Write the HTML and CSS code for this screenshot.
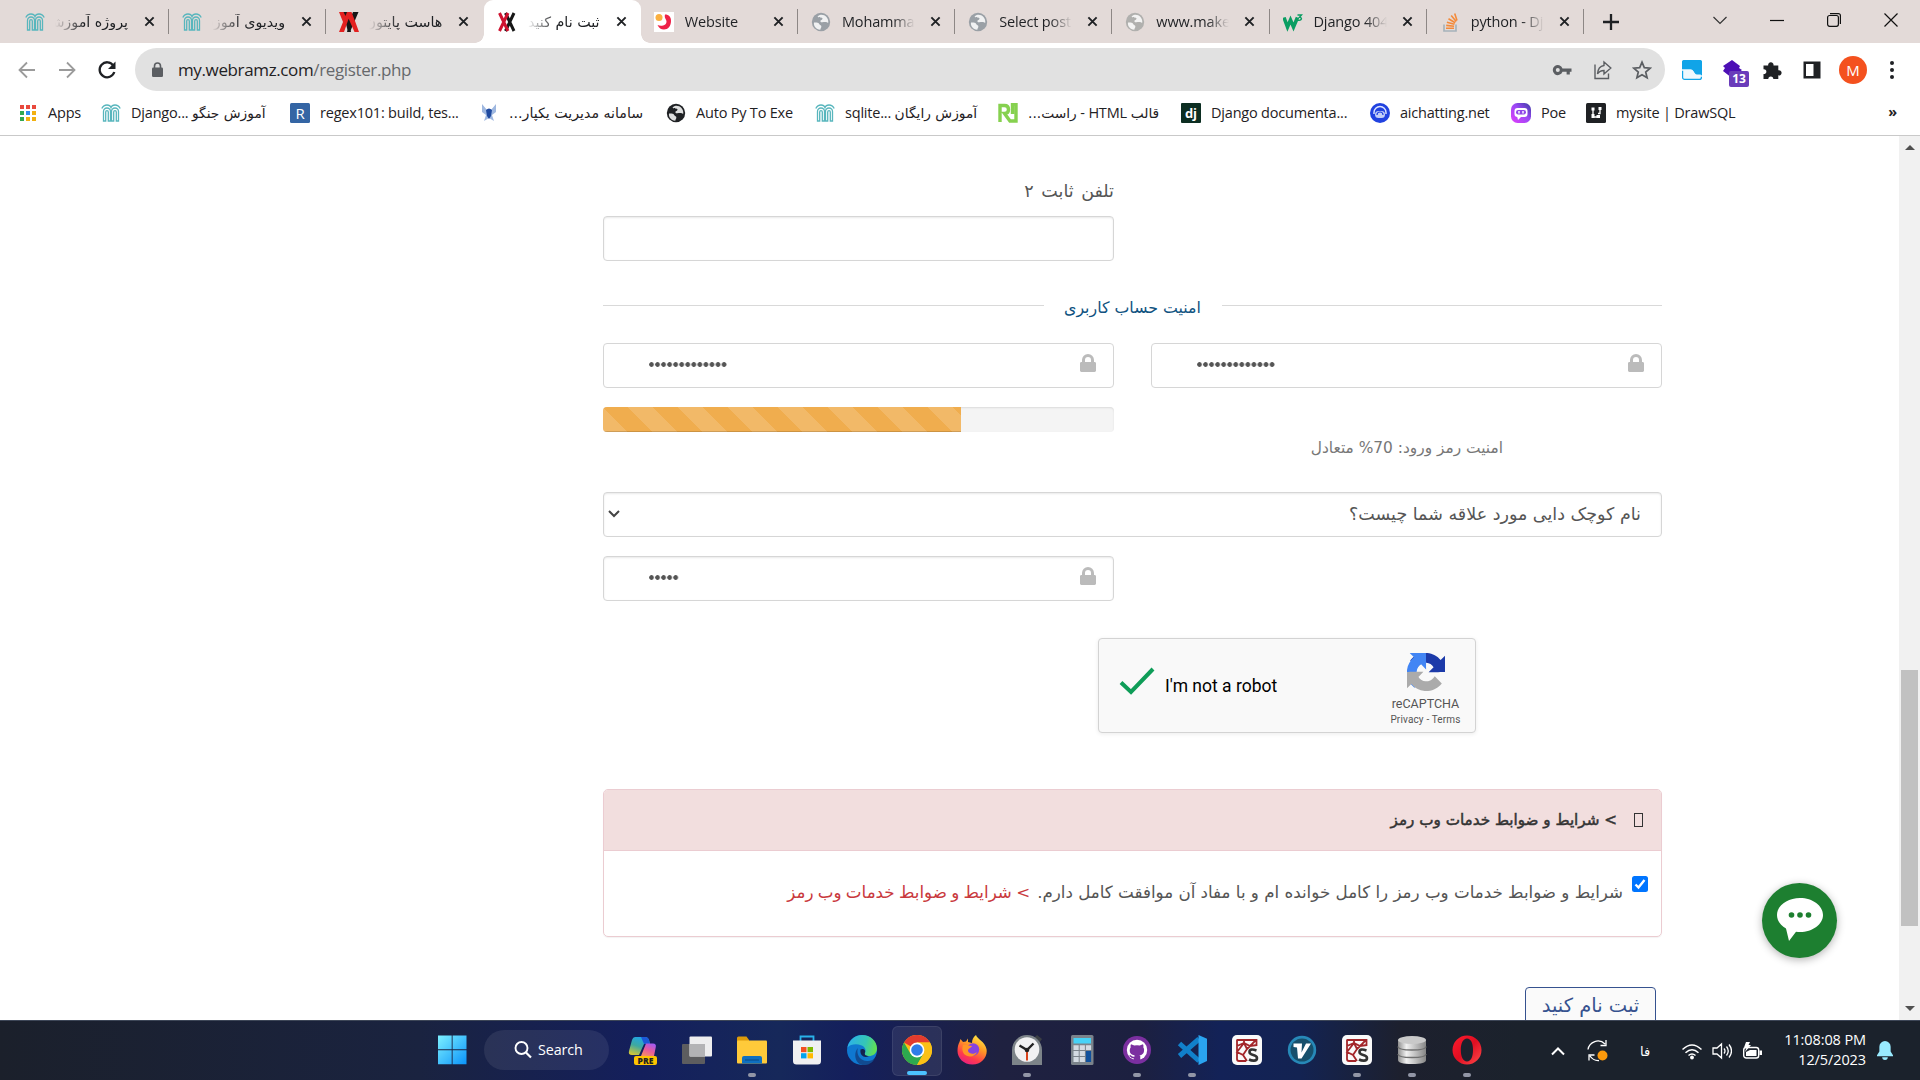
FILE: index.html
```html
<!DOCTYPE html>
<html lang="fa">
<head>
<meta charset="utf-8">
<title>ثبت نام کنید</title>
<link rel="stylesheet" href="styles.css">
</head>
<body>
<svg class="defs" width="0" height="0">
  <symbol id="i-x" viewBox="0 0 12 12"><path d="M1.5 1.5 10.5 10.5M10.5 1.5 1.5 10.5" stroke="#1f2124" stroke-width="2.1" fill="none"/></symbol>
  <symbol id="i-arches" viewBox="0 0 20 18"><g fill="none" stroke="#58b6bd" stroke-width="1.3"><path d="M.8 4.5C2 2 4 1 6 1s3.500 1 4 2.500C10.500 2 12 1 14 1s4 1 5.200 3.500"/><path d="M2.500 17V7.500a3.500 3.500 0 0 1 7 0V17H7.300V8a1.300 1.300 0 0 0-2.600 0v9zM10.500 17V7.500a3.500 3.500 0 0 1 7 0V17h-2.200V8a1.300 1.300 0 0 0-2.600 0v9z"/></g></symbol>
  <symbol id="i-globe" viewBox="0 0 20 20"><circle cx="10" cy="10" r="9.200"/><path d="M3 10.500c2 0 4.500-.2 5 1.300.6 1.600 2.800 1 2.300 3.200-.2 1.100-.9 1.600-1 2.700C5 17.500 2.300 14 3 10.500zM6.500 4.500c1.600 2 4.500.3 5 2 .3 1.500-2.500 1.300-2 3 .4 1.400 3 .6 4.700.6 1.800 0 2.300 1 3.100.4C17.800 6 14 2.300 9.800 2.700c-1.500.2-2.500.9-3.300 1.800z" fill="#fff" opacity=".85"/></symbol>
  <symbol id="i-lock" viewBox="0 0 16 18"><path d="M2 8V6a6 6 0 0 1 12 0v2h.6c.8 0 1.400.6 1.400 1.400v7.200c0 .8-.6 1.400-1.400 1.400H1.400C.6 18 0 17.400 0 16.600V9.400C0 8.600.6 8 1.400 8zm3 0h6V6a3 3 0 0 0-6 0z" fill="#bbb"/></symbol>
  <symbol id="i-spyder" viewBox="0 0 30 30"><rect width="30" height="30" rx="5" fill="#fafafa"/><path d="M4.500 5h20v6M5 5v19q0 2 2 2h7M5 11l7-3 6 3 7-1M12 8V5M12 8 5 17l6 3 4 6M5 17v-6M24 5l-9 9-4 6M15 14l-3-6" fill="none" stroke="#a3262a" stroke-width="1.800"/><path d="M24.500 15.500q-7-2.500-7 1.500c0 4 7.500 2 7.500 6 0 3.800-5.500 2.800-8 1.500" fill="none" stroke="#333" stroke-width="2.600"/></symbol>
</svg>

<header class="browser">
  <div class="tabs">
    <div class="tab"><svg class="fav"><use href="#i-arches"/></svg><span class="title rtl">پروژه آموزشی</span><svg class="x"><use href="#i-x"/></svg></div>
    <div class="tab"><svg class="fav"><use href="#i-arches"/></svg><span class="title rtl">ویدیوی آموزشی</span><svg class="x"><use href="#i-x"/></svg></div>
    <div class="tab nosep"><svg class="fav" viewBox="0 0 20 20"><path d="M4 0h5l2.500 6L14 0h5.500L11 20H9z" fill="#161616"/><path d="M0 0h4.500l4 8-3.500 12H0l4-10zM20 20h-4.500L8 3l2-3h2.500l3.500 9zM12 0l-7 20H.5L8 0z" fill="#e3201f"/><path d="M8 20l2-6 2 6z" fill="#161616"/></svg><span class="title rtl">هاست پایتون</span><svg class="x"><use href="#i-x"/></svg></div>
    <div class="tab active"><svg class="fav" viewBox="0 0 20 20"><path d="M8.500 1 17 19M17 1 8.500 19" stroke="#161616" stroke-width="3"/><path d="M2.500 1 11 19M11 1 2.500 19" stroke="#cf1330" stroke-width="3"/></svg><span class="title rtl">ثبت نام کنید</span><svg class="x"><use href="#i-x"/></svg></div>
    <div class="tab"><svg class="fav" viewBox="0 0 20 20"><rect width="20" height="20" fill="#fff"/><circle cx="5" cy="5.500" r="3.500" fill="#fbb040"/><path d="M11 2.500c4 0 6 2.500 6 6.500 0 5-3 8.500-7 8.500-3 0-5-1.500-6.500-4.500 3 1.500 9 1 9-3.500 0-2.500-2.500-3-1.500-7z" fill="#ee2147"/></svg><span class="title">Website</span><svg class="x"><use href="#i-x"/></svg></div>
    <div class="tab"><svg class="fav g1"><use href="#i-globe"/></svg><span class="title">Mohammad</span><svg class="x"><use href="#i-x"/></svg></div>
    <div class="tab"><svg class="fav g1"><use href="#i-globe"/></svg><span class="title">Select post</span><svg class="x"><use href="#i-x"/></svg></div>
    <div class="tab"><svg class="fav g2"><use href="#i-globe"/></svg><span class="title">www.makeuse</span><svg class="x"><use href="#i-x"/></svg></div>
    <div class="tab"><svg class="fav" viewBox="0 0 20 20"><path d="M1 5.500 4.500 15 7.500 8l3 7L14.500 5.500" fill="none" stroke="#0a9d62" stroke-width="3.600"/><path d="M14.500 3h4l-2 2.300c3 0 2.500 3.700-1.500 2.900" fill="none" stroke="#0a9d62" stroke-width="1.400"/></svg><span class="title">Django 404</span><svg class="x"><use href="#i-x"/></svg></div>
    <div class="tab"><svg class="fav" viewBox="0 0 20 20"><path d="M4 12.500V19h12v-6.500" fill="none" stroke="#a7b3bb" stroke-width="1.700"/><path d="M6 16.300h8M6.200 13.400l7.900.8M6.900 10.300l7.600 2M8.500 6.800l6.700 4M11.200 3.500l5 6M14.700 1.500l2.300 7" stroke="#f48a3a" stroke-width="1.600"/></svg><span class="title">python - Dj</span><svg class="x"><use href="#i-x"/></svg></div>
    <svg class="plus" viewBox="0 0 16 16"><path d="M8 0v16M0 8h16" stroke="#1f2124" stroke-width="2.300"/></svg>
    <div class="winctl">
      <svg viewBox="0 0 14 14"><path d="M.5 4 7 10.500 13.500 4" fill="none" stroke="#333" stroke-width="1.200"/></svg>
      <svg viewBox="0 0 14 14"><path d="M0 7.500h14" stroke="#111" stroke-width="1.200"/></svg>
      <svg viewBox="0 0 14 14"><path d="M3 .6h8.400a2 2 0 0 1 2 2V11" fill="none" stroke="#111" stroke-width="1.200"/><rect x=".6" y="2.500" width="10.800" height="10.800" rx="2" fill="none" stroke="#111" stroke-width="1.200"/></svg>
      <svg viewBox="0 0 14 14"><path d="M.5.5l13 13M13.500.5l-13 13" stroke="#111" stroke-width="1.200"/></svg>
    </div>
  </div>

  <div class="toolbar">
    <div class="nav">
      <svg viewBox="0 0 20 20"><path d="M18 10H3M10 2.500 2.500 10l7.500 7.500" fill="none" stroke="#9b9b9b" stroke-width="1.800"/></svg>
      <svg viewBox="0 0 20 20"><path d="M2 10h15M10 2.500l7.500 7.500-7.500 7.500" fill="none" stroke="#9b9b9b" stroke-width="1.800"/></svg>
      <svg viewBox="0 0 20 20"><path d="M16.300 5.500A7.500 7.500 0 1 0 17.300 12" fill="none" stroke="#1f2124" stroke-width="2.300"/><path d="M18.500 1.500v7.500H11z" fill="#1f2124"/></svg>
    </div>
    <div class="omni">
      <svg class="olock" viewBox="0 0 11 15"><path d="M2.500 6V4a3 3 0 0 1 6 0v2" fill="none" stroke="#5b5e62" stroke-width="1.600"/><rect y="5.500" width="11" height="9.500" rx="1.300" fill="#5b5e62"/></svg>
      <span class="url">my.webramz.com<i>/register.php</i></span>
      <svg class="oic" viewBox="0 0 20 20"><path d="M10.500 8.500h9v3.200h-1.700v2.800h-3.200v-2.800h-4.100a5 5 0 1 1 0-3.200zM5.800 8.100a2 2 0 1 0 0 4 2 2 0 0 0 0-4z" fill="#5b5e62"/></svg>
      <svg class="oic" viewBox="0 0 20 20"><path d="M3 4.500v14h13.500v-5M12 2l6.800 6L12 14v-3.500c-3 0-5 1-6.500 3.500.3-5 3-8 6.500-8.500z" fill="none" stroke="#5b5e62" stroke-width="1.400"/></svg>
      <svg class="oic star" viewBox="0 0 20 20"><path d="M10 2.200l2.300 5.400 5.900.5-4.500 3.900 1.400 5.700-5.100-3-5.100 3 1.400-5.700L1.800 8.100l5.900-.5z" fill="none" stroke="#5b5e62" stroke-width="1.700"/></svg>
    </div>
    <div class="ext">
      <svg viewBox="0 0 20 20"><rect x=".6" y=".6" width="18.800" height="18.800" rx="2" fill="#eef8fd" stroke="#10a4e8" stroke-width="1.200"/><path d="M0 2q0-2 2-2h16q2 0 2 2v12.500h-5c-3 0-2.500-4.500-6-4.500H0z" fill="#10a4e8"/><path d="M0 10h8.500c3.500 0 2 6 6 6H20" fill="none" stroke="#eef8fd" stroke-width="1.400"/></svg>
      <div class="badged"><svg viewBox="0 0 20 20"><path d="M10 0l8 6-1 2 3 2-10 8-9-7 2-3-2-2z" fill="#4d0fb5"/></svg><b>13</b></div>
      <svg viewBox="0 0 20 20"><path d="M1.500 5.500h4.700a2.700 2.700 0 1 1 5.300 0h4.800v4.800a2.600 2.600 0 1 1 0 5V19h-5a2.500 2.500 0 1 0-5 0H1.500v-5a2.400 2.400 0 1 0 0-4.700z" fill="#1f2124"/></svg>
      <svg viewBox="0 0 20 20"><path d="M1.500 1.500h17v17h-17zM4 4v12h7.500V4z" fill="#1f2124" fill-rule="evenodd"/></svg>
      <span class="avatar">M</span>
      <svg class="dots3" viewBox="0 0 20 20"><circle cx="10" cy="3" r="2"/><circle cx="10" cy="10" r="2"/><circle cx="10" cy="17" r="2"/></svg>
    </div>
  </div>

  <div class="marks">
    <div class="bm b1"><svg viewBox="0 0 20 20"><g><path d="M2 2h4v4H2zM8 2h4v4H8zM14 2h4v4h-4z" fill="#e9493d"/><path d="M2 8h4v4H2z" fill="#31a852"/><path d="M8 8h4v4H8z" fill="#2f8df0"/><path d="M14 8h4v4h-4zM8 14h4v4H8zM14 14h4v4h-4z" fill="#f2b010"/><path d="M2 14h4v4H2z" fill="#31a852"/></g></svg><span class="t">Apps</span></div>
    <div class="bm b2"><svg><use href="#i-arches"/></svg><span class="t">Django... <span class="fa">آموزش جنگو</span></span></div>
    <div class="bm b3"><svg viewBox="0 0 20 20"><rect width="20" height="20" rx="1.500" fill="#3465a4"/><text x="10" y="15.500" text-anchor="middle" class="svgR">R</text></svg><span class="t">regex101: build, tes...</span></div>
    <div class="bm b4"><svg viewBox="0 0 20 20"><path d="M3 1l5 6h4l5-6v8l-4 3 2 6-5-3-5 3 2-6-4-3z" fill="#9fb8e0"/><path d="M7 7q3-3 6 0l-1 6-2 3-2-3z" fill="#1f4aa0"/></svg><span class="t fa rtl">سامانه مدیریت یکپار...</span></div>
    <div class="bm b5"><svg class="g3"><use href="#i-globe"/></svg><span class="t">Auto Py To Exe</span></div>
    <div class="bm b6"><svg><use href="#i-arches"/></svg><span class="t">sqlite... <span class="fa">آموزش رایگان</span></span></div>
    <div class="bm b7"><svg viewBox="0 0 20 20"><path d="M2 19V2.500h4.500q4 0 4 4t-4 4L12 18h6V1h-3.500v10" fill="none" stroke="#86d14f" stroke-width="3.400"/></svg><span class="t rtl"><span class="fa">قالب</span> HTML - <span class="fa">راست...</span></span></div>
    <div class="bm b8"><svg viewBox="0 0 20 20"><rect width="20" height="20" rx="1" fill="#0c2e22"/><text x="10" y="14.500" text-anchor="middle" class="svgdj">dj</text></svg><span class="t">Django documenta...</span></div>
    <div class="bm b9"><svg viewBox="0 0 20 20"><circle cx="10" cy="10" r="10" fill="#2142e0"/><path d="M4 11V9.500a6 6 0 0 1 12 0V11" fill="none" stroke="#dfe6ff" stroke-width="1.400"/><rect x="5" y="8" width="10" height="7" rx="3.500" fill="#c3cff8"/><path d="M7 12a3 3 0 0 1 6 0" fill="none" stroke="#2142e0" stroke-width="1.200"/></svg><span class="t">aichatting.net</span></div>
    <div class="bm b10"><svg viewBox="0 0 20 20"><defs><linearGradient id="poe" x1="0" y1="1" x2="1" y2="0"><stop offset="0" stop-color="#e23dfb"/><stop offset=".55" stop-color="#9a48f5"/><stop offset="1" stop-color="#3a3ca0"/></linearGradient></defs><rect width="20" height="20" rx="6.500" fill="url(#poe)"/><rect x="3.500" y="5" width="13" height="9" rx="3" fill="#fff"/><path d="M6 13h5l-4 4z" fill="#fff"/><rect x="5" y="7" width="10" height="4.500" rx="2.200" fill="#9046e8"/><path d="M8 8v2.500M12 8v2.500" stroke="#fff" stroke-width="1.400"/></svg><span class="t">Poe</span></div>
    <div class="bm b11"><svg viewBox="0 0 20 20"><rect width="20" height="20" rx="1.500" fill="#1f2124"/><path d="M7 6v8h7M14 5v5.500h-2" fill="none" stroke="#fff" stroke-width="1.300"/><path d="M5.500 4.500h3v3h-3zM5.500 11h3v4h-3zM12.500 4h3v3h-3zM10.500 12h3.500v3h-3.500z" fill="#fff"/></svg><span class="t">mysite | DrawSQL</span></div>
    <span class="more">»</span>
  </div>
</header>

<main class="page">
  <form class="form" dir="rtl">
    <div class="half">
      <label class="lab fa"><span class="t">تلفن ثابت ۲</span></label>
      <div class="inp shade"></div>
    </div>
    <div class="legend"><hr><span class="fa t">امنیت حساب کاربری</span><hr></div>
    <div class="row">
      <div class="inp pw"><svg class="lk"><use href="#i-lock"/></svg><span class="pd n13"></span></div>
      <div class="inp pw"><svg class="lk"><use href="#i-lock"/></svg><span class="pd n13"></span></div>
    </div>
    <div class="row strength">
      <p class="fa hint"><span class="t">امنیت رمز ورود: <span class="num">70%</span> متعادل</span></p>
      <div class="bar"><div class="fill" style="width:70%"></div></div>
    </div>
    <div class="inp sel shade"><span class="fa t">نام کوچک دایی مورد علاقه شما چیست؟</span><svg viewBox="0 0 12 8"><path d="M1 1l5 5 5-5" fill="none" stroke="#444" stroke-width="2"/></svg></div>
    <div class="half answer"><div class="inp pw shade"><svg class="lk"><use href="#i-lock"/></svg><span class="pd n5"></span></div></div>
    <div class="captcha" dir="ltr">
      <svg class="ok" viewBox="0 0 36 28"><path d="M2 15.500 12 25 34 2" fill="none" stroke="#0f9d58" stroke-width="4"/></svg>
      <span class="robot t">I'm not a robot</span>
      <div class="brand">
        <svg viewBox="0 0 64 64"><path d="M64 31.955a33.240 33.240 0 0 0-.015-.945V4.568l-7.310 7.310C50.692 4.554 41.590-.117 31.400-.117c-10.605 0-20.026 4.980-26.041 12.690l11.982 12.108a15.872 15.872 0 0 1 4.853-5.447c2.092-1.633 5.057-2.969 9.206-2.969.501 0 .888.059 1.172.169 5.140.406 9.596 3.243 12.220 7.361l-8.481 8.482c10.743-.042 22.879-.067 27.688-.322" fill="#1c3aa9"/><path d="M31.862-.094a33.240 33.240 0 0 0-.945.015H4.475l7.310 7.310C4.460 13.214-.21 22.315-.21 32.506c0 10.604 4.980 20.025 12.690 26.040l12.108-11.981a15.872 15.872 0 0 1-5.447-4.854c-1.633-2.091-2.970-5.056-2.970-9.205 0-.502.060-.889.170-1.172.405-5.140 3.242-9.597 7.360-12.220l8.482 8.481c-.042-10.743-.067-22.880-.321-27.690" fill="#4285f4"/><path d="M-.001 32.055c.003.316.010.631.015.945v26.442l7.310-7.310c5.983 7.324 15.084 11.995 25.275 11.995 10.605 0 20.026-4.980 26.041-12.690L46.658 39.329a15.873 15.873 0 0 1-4.854 5.447c-2.092 1.633-5.056 2.969-9.205 2.969-.502 0-.888-.059-1.173-.169-5.140-.406-9.596-3.243-12.219-7.361l8.481-8.482c-10.743.042-22.880.067-27.689.322" fill="#ababab"/></svg>
        <b class="t">reCAPTCHA</b>
        <small class="t">Privacy - Terms</small>
      </div>
    </div>
    <section class="panel">
      <h3 class="fa"><i class="tofu"></i><span class="t">&gt; شرایط و ضوابط خدمات وب رمز</span></h3>
      <div class="body fa">
        <span class="cb"><svg viewBox="0 0 16 16"><path d="M3.500 8.500 6.500 11.500 12.500 4" fill="none" stroke="#fff" stroke-width="2.400"/></svg></span>
        <span class="t agree">شرایط و ضوابط خدمات وب رمز را کامل خوانده ام و با مفاد آن موافقت کامل دارم.</span>
        <a class="t">&gt; شرایط و ضوابط خدمات وب رمز</a>
      </div>
    </section>
    <div class="btn fa"><span class="t">ثبت نام کنید</span></div>
  </form>
  <div class="scroll"><i class="up"></i><div class="thumb"></div><i class="down"></i></div>
  <div class="chat"><svg viewBox="0 0 46 44"><path d="M23 0c12.700 0 23 7.600 23 17s-10.300 17-23 17q-2 0-4-.3L12 43 9 30.500C3.500 27.500 0 22.500 0 17 0 7.600 10.300 0 23 0z" fill="#fff"/><circle cx="14.500" cy="17" r="2.800"/><circle cx="23" cy="17" r="2.800"/><circle cx="31.500" cy="17" r="2.800"/></svg></div>
</main>

<footer class="taskbar">
  <div class="cell"><svg viewBox="0 0 30 30"><defs><linearGradient id="win" x1="0" y1="0" x2="1" y2="1"><stop offset="0" stop-color="#7df0ff"/><stop offset="1" stop-color="#0a93fa"/></linearGradient></defs><path d="M1 .500h13.700v13.800H1zM15.600.500H29.500v13.800H15.600zM1 15.300h13.700v14H1zM15.600 15.300H29.500v14H15.600z" fill="url(#win)"/></svg></div>
  <div class="search"><svg viewBox="0 0 18 18"><circle cx="7.500" cy="7" r="6" fill="none" stroke="#fff" stroke-width="1.900"/><path d="M12 11.500l5 5" stroke="#fff" stroke-width="2.200"/></svg><span class="t">Search</span></div>
  <div class="cell"><svg viewBox="0 0 30 30"><defs><linearGradient id="cpa" x1=".6" y1="0" x2=".2" y2="1"><stop offset="0" stop-color="#1fa5e8"/><stop offset=".5" stop-color="#3ea9a0"/><stop offset="1" stop-color="#d7c734"/></linearGradient><linearGradient id="cpb" x1=".7" y1="0" x2=".2" y2="1"><stop offset="0" stop-color="#a45bf0"/><stop offset=".5" stop-color="#e85a9c"/><stop offset="1" stop-color="#f58f63"/></linearGradient></defs><path d="M8 2h10q3 0 4 3l1 4h-6L12 20H5q-4 0-3-4L5 5q1-3 3-3z" fill="url(#cpa)"/><path d="M14 2h4q3 0 4 3l1 4h-6z" fill="#1c58d8"/><path d="M19 8.500h7q3.500 0 2.800 3.500L27 21H14z" fill="url(#cpb)"/><rect x="7" y="21" width="23" height="9" rx="2" fill="#fec400"/><text x="18.500" y="28.600" text-anchor="middle" class="svgpre">PRE</text></svg></div>
  <div class="cell"><svg viewBox="0 0 30 30"><rect y="9" width="23" height="20" rx="1" fill="#5d5d5f"/><rect x="7.500" y="1.500" width="22.500" height="20" rx="1" fill="#ededee"/><path d="M7.500 9H23v12.500H7.500z" fill="#b3b3b5"/></svg></div>
  <div class="cell run"><svg viewBox="0 0 30 30"><path d="M0 3q0-1.500 1.500-1.500h8L12 5v3H0z" fill="#dd9b0a"/><rect y="5.500" width="30" height="23" rx="1" fill="#ffca3a"/><path d="M5 28.500V23q0-2 2-2h16q2 0 2 2v5.500z" fill="#0f70c0"/><path d="M8 25h14" stroke="#0a4f8f" stroke-width="1.200"/></svg></div>
  <div class="cell"><svg viewBox="0 0 30 30"><path d="M8.500 6V1.500h13V6" fill="none" stroke="#29b2ea" stroke-width="1.800"/><path d="M1 5.500h28V26q0 3.500-3.500 3.500h-21Q1 29.500 1 26z" fill="#f0f0f1"/><path d="M9 12h5.500v5.200H9z" fill="#f25022"/><path d="M15.500 12H21v5.200h-5.500z" fill="#7fba00"/><path d="M9 18.200h5.500v5.200H9z" fill="#00a4ef"/><path d="M15.500 18.200H21v5.200h-5.500z" fill="#ffb900"/></svg></div>
  <div class="cell"><svg viewBox="0 0 30 30"><defs><linearGradient id="edg" x1="0" y1=".3" x2="1" y2=".5"><stop offset="0" stop-color="#2cb0ea"/><stop offset=".6" stop-color="#35c6b6"/><stop offset="1" stop-color="#63e04f"/></linearGradient></defs><circle cx="15" cy="15" r="15" fill="#0f78d0"/><path d="M.5 12.500C2 5 8 0 15 0c8.500 0 15 6 15 13.500 0 5-4 7.500-8 7.500-3 0-5-1-4-3 1.500-3 0-6.500-4-7.800C9 8.500 3 9.500.5 12.500z" fill="url(#edg)"/><path d="M11 13c-2 5 1 12.500 9 13 3 .3 6-.8 8-3-3 6-8 7.500-12.500 7C8 29 6 18 11 13z" fill="#114b91"/><path d="M13.500 14.500c2.500-1.500 5.500.5 4.500 3-1 2.500 1 3.500 4 3.500-4 2.500-9.500 0-8.500-6.500z" fill="#14224f"/></svg></div>
  <div class="cell on"><svg viewBox="0 0 30 30"><circle cx="15" cy="15" r="15" fill="#fbc116"/><path d="M15 15 2 7.500A15 15 0 0 1 28 7.500H15z" fill="#e33b2e"/><path d="M2 7.500A15 15 0 0 0 15 30l6.500-11.200L15 15 8.500 18.800z" fill="#2da94f"/><path d="M28 7.500H15v7.500l6.500 3.800L15 30A15 15 0 0 0 28 7.500z" fill="#fbc116"/><circle cx="15" cy="15" r="7.400" fill="#fff"/><circle cx="15" cy="15" r="5.800" fill="#2f7de9"/></svg></div>
  <div class="cell"><svg viewBox="0 0 30 30"><defs><linearGradient id="ff" x1=".8" y1="0" x2=".3" y2="1"><stop offset="0" stop-color="#fff04a"/><stop offset=".4" stop-color="#ff9a24"/><stop offset=".75" stop-color="#ff3b4c"/><stop offset="1" stop-color="#e81f80"/></linearGradient></defs><path d="M2.500 7l1-3 2.500 3 3-.5 2-3v3.500l4 1c0-3 1-6 4-8 1 4 9 6.500 10.500 14C31 22 24.500 29.500 15.500 29.500S.5 23 .5 16c0-4 .8-7 2-9z" fill="url(#ff)"/><circle cx="16" cy="14.500" r="6.200" fill="#8543e0"/><path d="M6 10c4-1 6 1 9 1-1 2-4 2-4 5 1 3 6 4 9 1-2 5-9 6-13 2-2-3-2-6-1-9z" fill="#ff9526"/></svg></div>
  <div class="cell run"><svg viewBox="0 0 30 30"><path d="M22 3l3-3 5 4-3 4z" fill="#3b3f44"/><path d="M0 15A15 15 0 0 1 30 15V30H0z" fill="#7d8489"/><circle cx="15" cy="14.500" r="12.300" fill="#f1f1f2"/><path d="M7.500 10.500 15 15l6.500-6.500" fill="none" stroke="#222" stroke-width="2.400"/><path d="M15 15v10.500" stroke="#d8431c" stroke-width="2"/><circle cx="15" cy="15" r="2.300" fill="#222"/></svg></div>
  <div class="cell"><svg viewBox="0 0 30 30"><rect x="4" width="22.500" height="30" rx="1.500" fill="#7b838b"/><rect x="6.500" y="3" width="17.500" height="5.500" fill="#46d2f7"/><path d="M6.500 10.200h5.200v4.800H6.500zM12.700 10.200h5.200v4.800h-5.200zM18.900 10.200h5.200v4.800h-5.200zM6.500 16.100h5.200v4.800H6.500zM12.700 16.100h5.200v4.800h-5.200zM6.500 22h5.200v5H6.500zM12.700 22h5.200v5h-5.200z" fill="#d3dae2"/><path d="M18.900 16.100h5.200V27h-5.200z" fill="#10509c"/></svg></div>
  <div class="cell run"><svg viewBox="0 0 30 30"><circle cx="15" cy="15" r="14" fill="#7b2fa0"/><circle cx="15" cy="15" r="10.200" fill="#fff"/><path d="M12.500 25.500v-3c-3 .7-3.500-1.500-4.800-2.200M17.500 25.500V20.500" fill="none" stroke="#7b2fa0" stroke-width="1.500"/><path d="M9 9.300l3.300 1.300q2.700-.6 5.400 0L21 9.300q.8 1.500.3 3 1.200 1.500.7 4-.6 3.700-4.500 4v6h-5v-6c-4-.4-5-3-4.700-5.500.1-1 .4-1.800.9-2.500q-.5-1.500.3-3z" fill="#7b2fa0"/></svg></div>
  <div class="cell run"><svg viewBox="0 0 30 30"><path d="M2.500 8.500 22 26M2.500 21 22 4" stroke="#1180cb" stroke-width="5"/><path d="M21.500 0 30 3.800V26l-8.500 4z" fill="#2aa4f0"/></svg></div>
  <div class="cell"><svg><use href="#i-spyder"/></svg></div>
  <div class="cell"><svg viewBox="0 0 30 30"><circle cx="15" cy="15" r="14.200" fill="#2789b8"/><circle cx="15" cy="15" r="11.500" fill="#17506c"/><path d="M6.500 8.500h8.500l-.5 9 4.500-9h5L14.500 23.500H11l-1-11-3.500-.5z" fill="#fff"/></svg></div>
  <div class="cell run"><svg><use href="#i-spyder"/></svg></div>
  <div class="cell run"><svg viewBox="0 0 30 30"><defs><linearGradient id="db"><stop offset="0" stop-color="#8e8e8e"/><stop offset=".3" stop-color="#f1f1f1"/><stop offset="1" stop-color="#868686"/></linearGradient></defs><path d="M1 5h28v20q0 4-14 4T1 25z" fill="url(#db)"/><ellipse cx="15" cy="5" rx="14" ry="4" fill="#c9c9c9"/><path d="M1 11.500q0 3.500 14 3.500t14-3.500M1 19q0 3.500 14 3.500T29 19" fill="none" stroke="#6f6f6f" stroke-width="1.300"/></svg></div>
  <div class="cell run"><svg viewBox="0 0 30 30"><defs><linearGradient id="op" x1="0" y1="0" x2="1" y2="1"><stop offset="0" stop-color="#ff1b2d"/><stop offset=".5" stop-color="#e00e22"/><stop offset="1" stop-color="#ff4b4b"/></linearGradient></defs><path d="M15 .5a14.500 14.500 0 1 1 0 29 14.500 14.500 0 0 1 0-29zM15 3.500c-4 0-6.200 5-6.200 11.500S11 26.500 15 26.500 21 21.500 21 15 19 3.500 15 3.500z" fill="url(#op)" fill-rule="evenodd"/></svg></div>
  <div class="tray">
    <svg class="chev" viewBox="0 0 14 10"><path d="M1 8.500 7 2.500l6 6" fill="none" stroke="#fff" stroke-width="2"/></svg>
    <svg class="sync" viewBox="0 0 22 22"><path d="M1 9.500A10 10 0 0 1 18 4M19 0v5.500h-5.500M12 20.500A10 10 0 0 1 3 16M2 20.500V15h5.500" fill="none" stroke="#fff" stroke-width="1.300"/><circle cx="15.500" cy="15.500" r="5" fill="#fd9a0b"/></svg>
    <span class="lang t">فا</span>
    <svg class="st" viewBox="0 0 20 20"><g fill="none" stroke="#fff" stroke-width="1.500"><path d="M.5 8.500q9.500-9 19 0M3.500 11.700q6.500-6 13 0M6.500 14.500q3.500-3 7 0"/></g><circle cx="10" cy="16.500" r="1.900" fill="#fff"/></svg>
    <svg class="st" viewBox="0 0 20 20"><g fill="none" stroke="#fff" stroke-width="1.300"><path d="M1 7h4l4.500-4v14L5 13H1zM12 7.500q2 2.500 0 5M14.500 5.500q3.500 4.500 0 9M17 3.500q5 6.500 0 13"/></g></svg>
    <svg class="st" viewBox="0 0 20 20"><rect x="1.700" y="6.500" width="15" height="10.500" rx="2.500" fill="none" stroke="#fff" stroke-width="1.400"/><path d="M4 15V11l4-2h6.500v6zM17.500 9.500H20v4.500h-2.500zM4 1h4L6.500 4H9l-6 7 1.500-4.500H2z" fill="#fff"/></svg>
    <div class="clock"><span class="t">11:08:08 PM</span><span class="t">12/5/2023</span></div>
    <svg class="bell" viewBox="0 0 17 20"><path d="M8.500 0a6 6 0 0 1 6 6v5l2.500 4v1H0v-1l2.500-4V6a6 6 0 0 1 6-6zM5.500 17.300h6a3 2.700 0 0 1-6 0z" fill="#99ebff"/></svg>
  </div>
</footer>
</body>
</html>
```
FILE: styles.css
```css
* { box-sizing: border-box; }
body {
  margin: 0;
  width: 1920px;
  height: 1080px;
  overflow: hidden;
  display: flex;
  flex-direction: column;
  font-family: "Open Sans", "DejaVu Sans", sans-serif;
  background: #fff;
  color: #1f2124;
}
svg { display: block; flex: none; }
.defs { position: absolute; }
.fa { font-family: "DejaVu Sans", sans-serif; }
.rtl { direction: rtl; }
.t { white-space: nowrap; }

/* tab strip */
.browser { height: 136px; flex: none; border-bottom: 1px solid #c9c9c9; }
.tabs { height: 43px; background: #e3dad8; display: flex; padding-left: 12px; align-items: center; }
.tab { width: 157.200px; height: 43px; display: flex; align-items: center; padding-left: 13px; position: relative; flex: none; }
.tab::after { content: ""; position: absolute; right: 0; top: 9px; width: 1px; height: 25px; background: #8d8785; }
.tab.nosep::after { display: none; }
.tab.active { background: #fff; border-radius: 9px 9px 0 0; }
.tab.active::before, .tab.active::after { content: ""; position: absolute; top: auto; bottom: 0; width: 9px; height: 9px; }
.tab.active::before { left: -9px; background: radial-gradient(circle at 0 0, transparent 8.500px, #fff 9px); }
.tab.active::after { right: -9px; background: radial-gradient(circle at 100% 0, transparent 8.500px, #fff 9px); }
.fav { width: 20px; height: 20px; }
.fav.g1 { fill: #9aa0a6; }
.fav.g2 { fill: #b0b0ae; }
.title { width: 73px; margin-left: 11px; font-size: 14.500px; letter-spacing: -.15px; white-space: nowrap; overflow: hidden; -webkit-mask-image: linear-gradient(90deg, #000 70%, transparent); mask-image: linear-gradient(90deg, #000 70%, transparent); }
.title.rtl { font-family: "DejaVu Sans", sans-serif; font-size: 14.300px; letter-spacing: 0; margin-left: 10px; margin-right: 1px; -webkit-mask-image: linear-gradient(270deg, #000 60%, transparent); mask-image: linear-gradient(270deg, #000 60%, transparent); }
.x { width: 11px; height: 11px; margin-left: 15px; }
.plus { width: 16px; height: 16px; margin-left: 19px; }
.winctl { margin-left: auto; display: flex; gap: 43px; padding-right: 22px; margin-bottom: 4px; }
.winctl svg { width: 14px; height: 14px; }

/* toolbar */
.toolbar { height: 53px; display: flex; align-items: center; padding-left: 17px; }
.nav { display: flex; gap: 20px; width: 118px; }
.nav svg { width: 20px; height: 20px; }
.omni { width: 1530px; height: 43px; border-radius: 22px; background: #e1e1e1; display: flex; align-items: center; padding: 0 13px 0 17px; gap: 20px; }
.olock { width: 11px; height: 15px; }
.url { flex: 1; margin-left: -5px; font-size: 17px; letter-spacing: -.37px; white-space: nowrap; }
.url i { font-style: normal; color: #66686b; }
.oic { width: 20px; height: 20px; }
.ext { display: flex; align-items: center; gap: 20px; margin-left: 17px; }
.ext > svg { width: 20px; height: 20px; }
.badged { position: relative; width: 20px; height: 20px; }
.badged b { position: absolute; left: 7px; top: 11px; width: 20px; height: 16px; border-radius: 2px; background: #6a3cba; color: #fff; font-size: 12px; line-height: 16px; text-align: center; }
.avatar { width: 28px; height: 28px; border-radius: 50%; background: #f4511e; color: #fff; font-size: 15px; line-height: 28px; text-align: center; margin-left: -3px; }
.ext > .dots3 { fill: #1f2124; width: 20px; margin-left: -5px; }

/* bookmarks */
.marks { height: 33px; display: flex; align-items: center; padding: 0 23px 0 18px; font-size: 14.500px; letter-spacing: -.2px; }
.bm { display: flex; align-items: center; gap: 10px; flex: none; }
.bm svg { width: 20px; height: 20px; }
.bm .fa { font-size: 13.800px; letter-spacing: 0; }
.bm .fa.t { font-size: 14.200px; }
.g3 { fill: #1f2124; }
.b1 { width: 83px; } .b2 { width: 189px; } .b3 { width: 189px; } .b4 { width: 187px; }
.b5 { width: 149px; } .b6 { width: 183px; } .b7 { width: 183px; } .b8 { width: 189px; }
.b9 { width: 141px; } .b10 { width: 75px; } .b11 { width: 150px; }
.more { margin-left: auto; font-weight: 700; margin-bottom: 3px; }
.svgR { font: 15px "Open Sans", sans-serif; fill: #fff; }
.svgdj { font: bold 13px "Open Sans", sans-serif; fill: #fff; }
.svgpre { font: 800 8.500px "Open Sans", sans-serif; fill: #222; }

/* page */
.page { flex: 1; min-height: 0; position: relative; overflow: hidden; display: flex; justify-content: space-between; }
.form { width: 1059px; margin-left: 603px; color: #555; font-size: 17.500px; flex: none; }
.half { width: 511px; margin-right: auto; }
.lab { display: block; height: 80px; padding-top: 43px; line-height: 24px; word-spacing: 2px; }
.inp { height: 45px; border: 1px solid #d6d6d6; border-radius: 4px; background: #fff; }
.shade { box-shadow: inset 0 1px 2px rgba(0, 0, 0, .09); }
.legend { display: flex; align-items: center; margin-top: 32px; height: 24px; color: #0f5280; font-size: 15.800px; }
.legend hr { flex: 1; border: 0; border-top: 1px solid #d9d9d9; margin: 0; }
.legend span { width: 178px; text-align: center; padding-top: 4px; }
.row { display: flex; justify-content: space-between; margin-top: 26px; }
.row > * { width: 511px; }
.pw { display: flex; justify-content: space-between; padding: 10px 17px 0 45px; }
.lk { width: 16px; height: 18px; }
.pd { height: 5px; margin-top: 8px; background: radial-gradient(circle at 2.500px 2.500px, #555 2px, transparent 2.700px) 0 0 / 6.050px 5px repeat-x; }
.n13 { width: 78px; } .n5 { width: 29.500px; }
.strength { margin-top: 19px; height: 85px; }
.hint { margin: 29px 0 0; color: #777; padding-right: 159px; line-height: 24px; font-size: 15.400px; }
.bar { height: 25px; border-radius: 4px; background: #f4f4f4; box-shadow: inset 0 1px 2px rgba(0, 0, 0, .1); overflow: hidden; direction: ltr; }
.fill { height: 100%; background: linear-gradient(45deg, rgba(255, 255, 255, .15) 25%, transparent 25%, transparent 50%, rgba(255, 255, 255, .15) 50%, rgba(255, 255, 255, .15) 75%, transparent 75%) 25px 0 / 50px 50px #f0ad4e; box-shadow: inset 0 -1px 0 rgba(0, 0, 0, .15); }
.sel { display: flex; align-items: center; justify-content: space-between; padding: 0 20px 2px 4px; }
.sel svg { width: 12px; height: 8px; }
.answer { margin-top: 19px; }
.captcha { width: 378px; height: 95px; margin: 37px 186px 0 0; border: 1px solid #d3d3d3; border-radius: 4px; background: #f9f9f9; box-shadow: 0 1px 4px rgba(0, 0, 0, .08); display: flex; font-family: Roboto, sans-serif; color: #000; }
.ok { width: 36px; height: 28px; margin: 28px 0 0 20px; }
.robot { margin: 37px 0 0 10px; font-size: 17.500px; line-height: 21px; }
.brand { margin: 14px 14px 0 auto; width: 71px; display: flex; flex-direction: column; align-items: center; color: #555; }
.brand svg { width: 38px; height: 38px; }
.brand b { font-weight: 400; font-size: 12.500px; line-height: 16px; margin-top: 5px; }
.brand small { font-size: 10px; line-height: 16px; letter-spacing: .15px; }
.panel { margin-top: 56px; height: 148px; border: 1px solid #ebccd1; border-radius: 5px; box-shadow: 0 1px 1px rgba(0, 0, 0, .05); overflow: hidden; }
.panel h3 { margin: 0; height: 61px; background: #f2dede; border-bottom: 1px solid #ebccd1; display: flex; align-items: center; color: #333; font-size: 15.200px; font-weight: 400; -webkit-text-stroke: .5px #333; padding-right: 18px; gap: 17px; }
.tofu { width: 9px; height: 14px; border: 1px solid #333; }
.body { display: flex; padding: 25px 13px 0 0; font-size: 16.700px; line-height: 24px; }
.cb { width: 16px; height: 16px; border-radius: 2.500px; background: #0075ff; }
.cb svg { width: 16px; height: 16px; }
.agree { margin: 4px 9px 0 7px; }
.body a { margin-top: 4px; color: #c9393d; word-spacing: -1px; }
.btn { width: 131px; height: 45px; margin: 50px 6px 0 0; border: 1px solid #36528f; border-radius: 4px; background: #fafafa; color: #36528f; font-size: 19.500px; line-height: 36px; text-align: center; }
.scroll { width: 21px; background: #f1f1f1; display: flex; flex-direction: column; align-items: center; }
.thumb { width: 17px; height: 256px; background: #c1c1c1; margin-top: 522px; }
.up { margin-top: 9px; border: 5px solid transparent; border-top: 0; border-bottom-color: #505050; margin-bottom: -2px; }
.down { margin-top: auto; margin-bottom: 9px; border: 5px solid transparent; border-bottom: 0; border-top-color: #505050; }
.chat { position: absolute; left: 1762px; top: 747px; width: 75px; height: 75px; border-radius: 50%; background: #1d7f30; box-shadow: 0 2px 8px rgba(0, 0, 0, .3); display: flex; justify-content: center; padding-top: 15px; }
.chat svg { width: 46px; height: 44px; fill: #1d7f30; }

/* taskbar */
.taskbar { height: 60px; flex: none; border-top: 1px solid #3d4657; background: linear-gradient(90deg, #1b202b 0, #1a2340 420px, #141f5c 640px, #16285a 780px, #141f5c 850px, #1f2140 1000px, #1c2040 1140px, #132257 1220px, #132352 1300px, #1d202e 1400px, #1b222c 1520px); display: flex; align-items: center; padding-left: 424px; color: #fff; }
.cell { width: 55px; height: 50px; display: flex; align-items: center; justify-content: center; position: relative; flex: none; }
.cell svg { width: 30px; height: 30px; margin-bottom: 1px; }
.cell.run::after { content: ""; position: absolute; bottom: -1px; width: 8px; height: 4px; border-radius: 2px; background: #9296a6; }
.cell.on { background: rgba(255, 255, 255, .08); border-radius: 6px; width: 50px; margin: 0 2.500px; border: 1px solid rgba(255, 255, 255, .08); }
.cell.on::after { content: ""; position: absolute; bottom: 0; width: 20px; height: 4px; border-radius: 2px; background: #4cc2ff; }
.search { width: 125px; height: 40px; margin: 0 5px 2px; border-radius: 20px; background: rgba(255, 255, 255, .08); display: flex; align-items: center; padding-left: 30px; gap: 6px; font-size: 14.300px; letter-spacing: -.1px; }
.search svg { width: 18px; height: 18px; }
.tray { margin-left: auto; display: flex; align-items: center; padding-right: 27px; }
.chev { width: 14px; height: 10px; }
.sync { width: 22px; height: 22px; margin-left: 22px; }
.lang { width: 12px; margin-left: 31px; font-size: 13px; }
.st { width: 20px; height: 20px; margin-left: 10px; }
.lang + .st { margin-left: 30px; }
.clock { width: 104px; text-align: right; font-size: 14.500px; letter-spacing: -.1px; line-height: 20px; display: flex; flex-direction: column; margin-bottom: 2px; }
.bell { width: 16px; height: 19px; margin-left: 11px; }
```
